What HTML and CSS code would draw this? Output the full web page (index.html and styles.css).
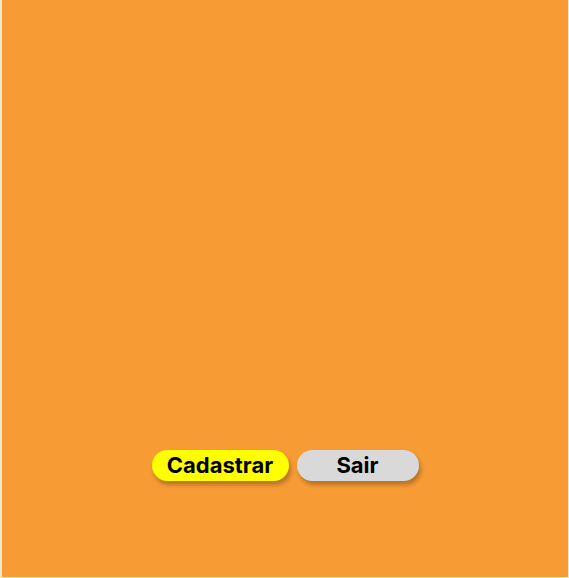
FILE: index.html
```html
<!DOCTYPE html>
<html lang="pt-BR">
<head>
<meta charset="utf-8">
<title>Cadastro</title>
<link rel="stylesheet" href="styles.css">
</head>
<body>
  <main class="frame">
    <div class="actions">
      <button class="btn btn-primary" type="button">Cadastrar</button>
      <button class="btn btn-secondary" type="button">Sair</button>
    </div>
  </main>
</body>
</html>
```
FILE: styles.css
```css
html, body {
  margin: 0;
  padding: 0;
}
body {
  background: #fbe6cb;
  width: 569px;
  height: 578px;
  overflow: hidden;
  font-family: Inter, "Liberation Sans", sans-serif;
}
.frame {
  box-sizing: border-box;
  margin-left: 2px;
  width: 566px;
  height: 577px;
  background: #f79b34;
  display: flex;
  flex-direction: column;
  justify-content: flex-end;
  align-items: center;
  padding-bottom: 96px;
}
.actions {
  display: flex;
  gap: 8px;
}
.btn {
  height: 31px;
  border: none;
  border-radius: 16px;
  font-family: Inter, "Liberation Sans", sans-serif;
  font-weight: 700;
  font-size: 22px;
  line-height: 31px;
  color: #000;
  padding: 0;
  box-shadow: 2px 4px 4px rgba(0, 0, 0, 0.25);
  cursor: pointer;
}
.btn-primary {
  width: 137px;
  background: #ffff00;
}
.btn-secondary {
  width: 122px;
  background: #d9d9d9;
}
```
